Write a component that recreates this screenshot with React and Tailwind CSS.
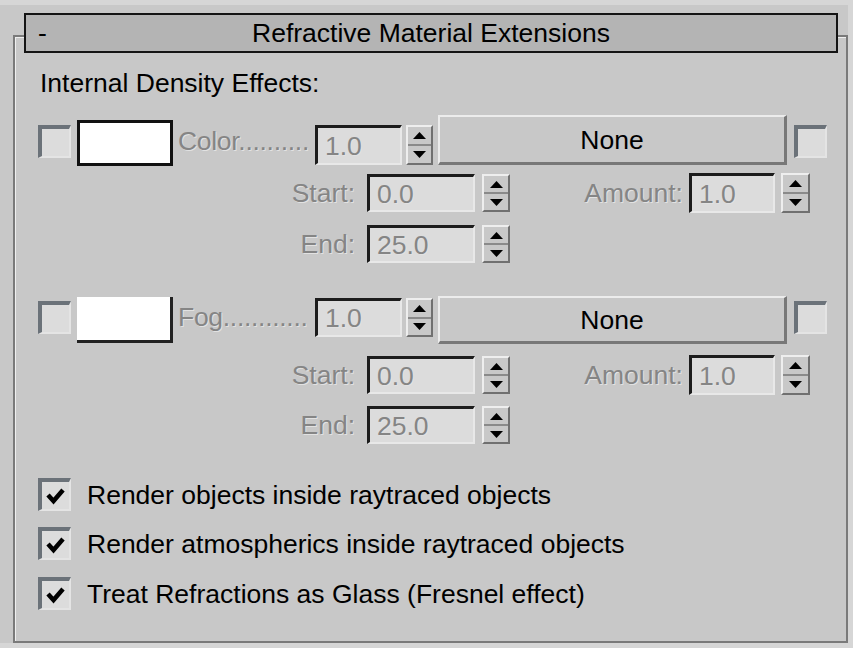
import React from "react";

const DIS = "text-[#858585] [text-shadow:1px_1px_0_#e2e2e2]";

function UpTri() {
  return (
    <svg width="13" height="7" viewBox="0 0 13 7"><polygon points="6.5,0 13,7 0,7" fill="#000" /></svg>
  );
}
function DownTri() {
  return (
    <svg width="13" height="7" viewBox="0 0 13 7"><polygon points="0,0 13,0 6.5,7" fill="#000" /></svg>
  );
}

function Spinner({ className }) {
  return (
    <div className={"flex flex-col bg-[#c8c8c8] border-t-2 border-l-2 border-t-[#eeeeee] border-l-[#eeeeee] border-b-2 border-r-2 border-b-[#707070] border-r-[#707070] " + className}>
      <div className="flex-1 flex items-center justify-center border-b-2 border-b-[#8a8a8a]">
        <UpTri />
      </div>
      <div className="flex-1 flex items-center justify-center">
        <DownTri />
      </div>
    </div>
  );
}

function Edit({ value, className }) {
  return (
    <div className={"flex items-center bg-[#dcdcdc] border-t-[3px] border-l-[3px] border-t-[#1c1c1c] border-l-[#1c1c1c] border-b-2 border-r-2 border-b-[#e8e8e8] border-r-[#e8e8e8] pl-[7px] leading-[30px] " + DIS + " " + className}>
      {value}
    </div>
  );
}

function Check({ checked, className }) {
  return (
    <div className={"w-[33px] h-[33px] flex items-center justify-center bg-[#dcdcdc] border-t-[4px] border-l-[4px] border-t-[#6b7279] border-l-[#6b7279] border-b-2 border-r-2 border-b-[#e4e4e4] border-r-[#e4e4e4] " + (className || "")}>
      {checked && (
        <svg width="22" height="20" viewBox="0 0 22 20">
          <polyline points="3,9 8.5,15 18,4" fill="none" stroke="#000" strokeWidth="4.5" strokeLinecap="butt" strokeLinejoin="miter" />
        </svg>
      )}
    </div>
  );
}

function Button({ children, className }) {
  return (
    <div className={"flex items-center justify-center bg-[#c8c8c8] border-t-2 border-l-2 border-t-[#ececec] border-l-[#ececec] border-b-[3px] border-r-[3px] border-b-[#787878] border-r-[#787878] text-black leading-[30px] " + className}>
      {children}
    </div>
  );
}

function SubRow({ label, value, amount, className }) {
  return (
    <div className={"flex items-center h-[40px] " + className}>
      <div className={"w-[340px] text-right leading-[30px] " + DIS}>{label}</div>
      <Edit value={value} className="ml-[12px] w-[108px] h-[38px]" />
      <Spinner className="ml-[7px] w-[28px] h-[38px]" />
      {amount && (
        <>
          <div className={"w-[173px] text-right leading-[30px] " + DIS}>Amount:</div>
          <Edit value={amount} className="ml-[6px] w-[86px] h-[40px]" />
          <Spinner className="ml-[6px] w-[29px] h-[40px]" />
        </>
      )}
    </div>
  );
}

export default function App() {
  return (
    <div className="w-[853px] h-[648px] overflow-hidden bg-[#c8c8c8] border-t-[5px] border-r-[5px] border-b-[5px] border-[#d6d6d6] font-['Liberation_Sans',Arial,sans-serif] text-[26.5px] text-black">
      <div className="ml-[13px] mt-[30px] h-[608px] border-2 border-[#7a7a7a] shadow-[inset_1px_1px_0_#efefef] flex flex-col">
        {/* Title bar */}
        <div className="-mt-[24px] ml-[9px] mr-[8px] h-[40px] shrink-0 border-2 border-[#141414] bg-[#b4b4b4] grid grid-cols-[60px_1fr_60px] items-center">
          <div className="pl-[12px] leading-[30px]">-</div>
          <div className="text-center leading-[30px]">Refractive Material Extensions</div>
          <div />
        </div>

        <div className="mt-[15px] ml-[25px] leading-[30px] h-[30px]">Internal Density Effects:</div>

        {/* Color row */}
        <div className="mt-[17px] h-[51px] flex items-start">
          <Check className="ml-[23px] mt-[10px]" />
          <div className="ml-[6px] mt-[5px] w-[96px] h-[46px] bg-white border-[3px] border-[#111111]" />
          <div className={"ml-[5px] mt-[11px] w-[134px] whitespace-nowrap leading-[30px] tracking-[-0.3px] " + DIS}>Color..........</div>
          <Edit value="1.0" className="ml-[3px] mt-[10px] w-[87px] h-[40px]" />
          <Spinner className="ml-[4px] mt-[10px] w-[27px] h-[40px]" />
          <Button className="ml-[5px] w-[349px] h-[50px]">None</Button>
          <Check className="ml-[7px] mt-[10px]" />
        </div>
        <SubRow label="Start:" value="0.0" amount="1.0" className="mt-[7px]" />
        <SubRow label="End:" value="25.0" className="mt-[11px]" />

        {/* Fog row */}
        <div className="mt-[32px] h-[48px] flex items-start">
          <Check className="ml-[23px] mt-[5px]" />
          <div className="ml-[6px] mt-[1px] w-[96px] h-[46px] bg-white border-r-[3px] border-b-[3px] border-[#222222]" />
          <div className={"ml-[5px] mt-[6px] w-[134px] whitespace-nowrap leading-[30px] tracking-[-0.3px] " + DIS}>Fog............</div>
          <Edit value="1.0" className="ml-[3px] mt-[2px] w-[87px] h-[39px]" />
          <Spinner className="ml-[4px] mt-[2px] w-[27px] h-[39px]" />
          <Button className="ml-[5px] w-[349px] h-[48px]">None</Button>
          <Check className="ml-[7px] mt-[5px]" />
        </div>
        <SubRow label="Start:" value="0.0" amount="1.0" className="mt-[11px]" />
        <SubRow label="End:" value="25.0" className="mt-[10px]" />

        {/* Checkbox options */}
        <div className="mt-[33px] ml-[23px] flex flex-col">
          <div className="flex items-center h-[33px]">
            <Check checked />
            <span className="ml-[16px] leading-[30px]">Render objects inside raytraced objects</span>
          </div>
          <div className="flex items-center h-[33px] mt-[16px]">
            <Check checked />
            <span className="ml-[16px] leading-[30px]">Render atmospherics inside raytraced objects</span>
          </div>
          <div className="flex items-center h-[33px] mt-[17px]">
            <Check checked />
            <span className="ml-[16px] leading-[30px]">Treat Refractions as Glass (Fresnel effect)</span>
          </div>
        </div>
      </div>
    </div>
  );
}
